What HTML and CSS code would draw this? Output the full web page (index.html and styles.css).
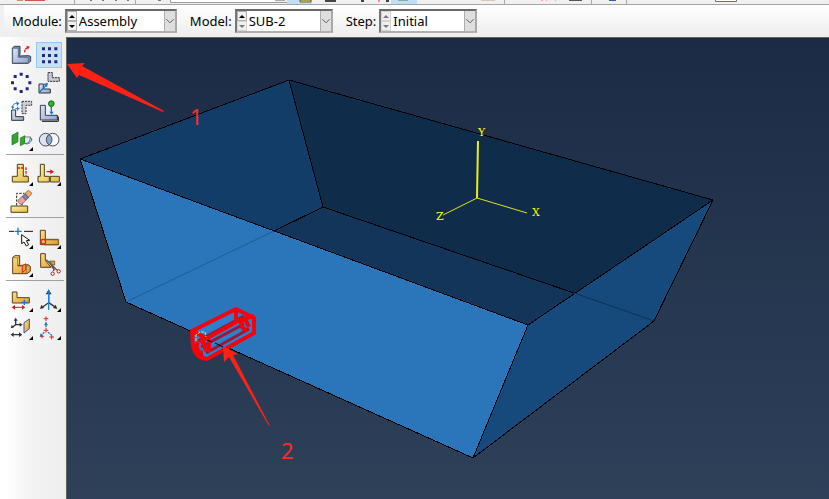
FILE: index.html
```html
<!DOCTYPE html>
<html lang="en">
<head>
<meta charset="utf-8">
<title>Assembly module</title>
<link rel="stylesheet" href="styles.css">
</head>
<body>
<svg width="0" height="0" class="defs" aria-hidden="true">
  <defs>
    <linearGradient id="steel" x1="0" y1="0" x2="1" y2="1"><stop offset="0" stop-color="#dce6f5"/><stop offset="1" stop-color="#8ea5ca"/></linearGradient>
    <linearGradient id="gold" x1="0" y1="0" x2="1" y2="1"><stop offset="0" stop-color="#ffef9c"/><stop offset="1" stop-color="#e3bb4c"/></linearGradient>
    <linearGradient id="amber" x1="0" y1="0" x2="1" y2="1"><stop offset="0" stop-color="#ffdf8a"/><stop offset="1" stop-color="#dc9c35"/></linearGradient>
  </defs>
</svg>

<header class="topstrip">
  <svg width="829" height="4" viewBox="0 0 829 4" aria-hidden="true">
    <path d="M17 0h6v1h-6z" fill="#b99b5c"/><path d="M25 0h20v1H25z" fill="#d9534c"/>
    <path d="M74.500 0v4M135.500 0v4M504.500 0v4M591.500 0v4M626.500 0v4" stroke="#a8a8a8"/>
    <path d="M90 0h2M102 0h2M115 0h2M127 0h2M158 0h3" stroke="#777" stroke-width="2"/>
    <path d="M170.500 0v2.500H288" fill="none" stroke="#9a9a9a"/><path d="M171 0h104v2H171z" fill="#fff"/>
    <path d="M275 0h10v1h-10z" fill="#aaa"/><path d="M287 0h25v4h-25zM391 0h26v4h-26z" fill="#bfdff6"/>
    <path d="M300 0h11v2h-11z" fill="#f1e37c" stroke="#655d2c"/>
    <path d="M325 1h11M361 1h3M386 1h3" stroke="#444" stroke-width="2"/><path d="M379 0v2" stroke="#d33"/>
    <path d="M398 0h10v1h-10z" fill="#8aa"/><path d="M481 0h14v1h-14z" fill="#d5cbb5"/>
    <path d="M541 0h2v1h-2zM546 0h1v1h-1zM555 0h1v1h-1z" fill="#f3a9a9"/><path d="M569 0h13v1h-13z" fill="#555"/><path d="M609 0h7v1h-7z" fill="#315fa5"/>
    <path d="M715.500-1v2.500h21V-1" fill="#fff" stroke="#77715b"/>
  </svg>
</header>

<form class="contextbar">
  <div class="field">
    <label for="module">Module:</label>
    <div class="combo wide">
      <span class="spin"><button type="button" aria-label="Previous module"><i class="up"></i></button><button type="button" aria-label="Next module"><i class="down"></i></button></span>
      <select id="module"><option>Assembly</option></select>
      <svg class="chevron" viewBox="0 0 11 20" aria-hidden="true"><path d="M1.500 8l4 4 4-4"/></svg>
    </div>
  </div>
  <div class="field">
    <label for="model">Model:</label>
    <div class="combo">
      <span class="spin"><button type="button" aria-label="Previous model"><i class="up"></i></button><button type="button" aria-label="Next model" disabled><i class="down"></i></button></span>
      <select id="model"><option>SUB-2</option></select>
      <svg class="chevron" viewBox="0 0 11 20" aria-hidden="true"><path d="M1.500 8l4 4 4-4"/></svg>
    </div>
  </div>
  <div class="field">
    <label for="step">Step:</label>
    <div class="combo">
      <span class="spin"><button type="button" aria-label="Previous step" disabled><i class="up"></i></button><button type="button" aria-label="Next step" disabled><i class="down"></i></button></span>
      <select id="step"><option>Initial</option></select>
      <svg class="chevron" viewBox="0 0 11 20" aria-hidden="true"><path d="M1.500 8l4 4 4-4"/></svg>
    </div>
  </div>
</form>

<div class="workspace">
  <nav class="toolbox" aria-label="Assembly tools">
    <div class="group">
      <button type="button" aria-label="Create instance"><svg viewBox="24 18 78 78">
        <path d="M37 36l6-5h17v25l-5 4 31-1 6 2v14l-7 7H37z" fill="#7890b8" stroke="#333f55" stroke-width="3"/>
        <path d="M38 37h17v27h30v17H38z" fill="url(#steel)" stroke="#465675" stroke-width="2"/>
        <path d="M74 49c0-9 4-13 10-14" fill="none" stroke="#e01b1b" stroke-width="4" stroke-dasharray="7 2"/><path d="M79 29l10 3-6 9z" fill="#e01b1b"/></svg></button>
      <button type="button" class="active" aria-label="Linear pattern"><svg viewBox="108 18 78 78"><path d="M126 34h9v9h-9zm18 0h9v9h-9zm19 0h9v9h-9zM126 54h9v9h-9zm18 0h9v9h-9zm19 0h9v9h-9zM126 73h9v9h-9zm18 0h9v9h-9zm19 0h9v9h-9z" fill="#26267c"/></svg></button>
      <button type="button" aria-label="Radial pattern"><svg viewBox="24 102 78 78"><path d="M59 110h9v9h-9zm18 7h9v9h-9zm8 19h9v9h-9zm-8 18h9v9h-9zm-18 8h9v9h-9zm-18-8h9v9h-9zm-8-18h9v9h-9zm8-19h9v9h-9z" fill="#26267c"/></svg></button>
      <button type="button" aria-label="Translate instance"><svg viewBox="108 102 78 78">
        <path d="M144 110h13v15h21v11h-34z" fill="#c3cbd8" stroke="#333" stroke-width="3" stroke-dasharray="7 2"/>
        <path d="M117 144h13v15h21v12h-34z" fill="url(#steel)" stroke="#333" stroke-width="3"/>
        <path d="M119 168l21-22" stroke="#1677d2" stroke-width="4"/><path d="M130 144l14-4-3 14z" fill="#1677d2"/></svg></button>
      <button type="button" aria-label="Rotate instance"><svg viewBox="24 186 78 78">
        <path d="M66 196h29v12H78v25H66z" fill="#c9cfdb" stroke="#333" stroke-width="3" stroke-dasharray="6 3"/>
        <path d="M35 222h12v20h24v11H35z" fill="url(#steel)" stroke="#333" stroke-width="3"/>
        <path d="M38 216c-2-10 7-16 15-13M46 218h13m-6-6v12" fill="none" stroke="#1677d2" stroke-width="3"/><path d="M49 196l9 6-7 8zM33 211l5 9 5-8z" fill="#1677d2"/></svg></button>
      <button type="button" aria-label="Translate to"><svg viewBox="108 186 78 78">
        <path d="M121 208h15v30h36v14h-51z" fill="url(#steel)" stroke="#333f55" stroke-width="3"/><path d="M171 239l4 4v13h-49" fill="none" stroke="#111" stroke-width="3"/>
        <path d="M154 209v22" stroke="#1677d2" stroke-width="4"/><path d="M148 227h13l-6 9z" fill="#1677d2"/><circle cx="154" cy="203" r="8.500" fill="#2fb32a" stroke="#136b16" stroke-width="3"/></svg></button>
      <button type="button" class="more" aria-label="Create constraint"><svg viewBox="24 270 78 78">
        <path d="M36 298l18-10v29l-18 10zM61 306l14-7v23l-14 7z" fill="#35a52d" stroke="#1f701f" stroke-width="2"/>
        <path d="M75 303h17l-5 15-11 6" fill="#e8edf4" stroke="#444" stroke-width="2"/><path d="M75 322c10 4 17-1 20-12m-5-2h5v6" fill="none" stroke="#1677d2" stroke-width="3"/></svg></button>
      <button type="button" aria-label="Merge or cut instances"><svg viewBox="108 270 78 78"><circle cx="137" cy="311" r="19" fill="#dce4f1"/><circle cx="158" cy="311" r="19" fill="#f7f8fb"/><path d="M147 295a19 19 0 0 1 0 32 19 19 0 0 1 0-32z" fill="#8fa7d0"/><g fill="none" stroke="#4a4f58" stroke-width="3"><circle cx="137" cy="311" r="19"/><circle cx="158" cy="311" r="19"/></g></svg></button>
    </div>
    <hr>
    <div class="group">
      <button type="button" class="more" aria-label="Create feature"><svg viewBox="24 21 78 78">
        <path d="M52 31h18v36h15v17H37V67h15z" fill="url(#gold)" stroke="#4d421c" stroke-width="3"/><path d="M54 42h16" stroke="#d51c1c" stroke-width="5" stroke-dasharray="6 3"/><path d="M78 40v25" stroke="#d51c1c" stroke-width="4" stroke-dasharray="8 3"/></svg></button>
      <button type="button" class="more" aria-label="Move feature"><svg viewBox="108 21 78 78">
        <path d="M121 31h12v36h15v17h-34V67h7zM151 67h27v17h-27z" fill="url(#gold)" stroke="#4d421c" stroke-width="3"/><path d="M140 53h14" stroke="#d51c1c" stroke-width="4"/><path d="M151 46l11 7-11 8z" fill="#d51c1c"/></svg></button>
      <button type="button" aria-label="Delete feature"><svg viewBox="24 105 78 78">
        <path d="M33 156h50v19H33z" fill="url(#gold)" stroke="#4d421c" stroke-width="3"/><path d="M50 154v-36h23M66 154v-10" fill="none" stroke="#222" stroke-width="3" stroke-dasharray="7 4"/>
        <path d="M75 118l10-9 11 9-12 14z" fill="#f5ae63" stroke="#6b4a2a" stroke-width="2"/><path d="M67 127l8-8 11 12-9 8z" fill="#7186b8" stroke="#34415f" stroke-width="2"/><path d="M55 138l11-11 11 12-10 11c-6 4-16-6-12-12z" fill="#eea29c" stroke="#7c403f" stroke-width="2"/></svg></button>
    </div>
    <hr>
    <div class="group">
      <button type="button" class="more" aria-label="Create datum point"><svg viewBox="24 12 78 78">
        <path d="M27 34h15m30 0h27" stroke="#111" stroke-width="3"/><path d="M44 34h21M54 23v22" stroke="#1677d2" stroke-width="4"/><path d="M65 44v27l7-5 7 12 7-4-7-12 10-1z" fill="#fff" stroke="#111" stroke-width="3"/></svg></button>
      <button type="button" class="more" aria-label="Assembly features"><svg viewBox="108 12 78 78">
        <path d="M121 31h15v27h39v16h-54z" fill="url(#amber)" stroke="#5b4218" stroke-width="3"/><path d="M136 60h40v15h-42" fill="none" stroke="#92712f" stroke-width="2"/><circle cx="130" cy="65" r="7" fill="#f4bf62" stroke="#e02515" stroke-width="4"/></svg></button>
      <button type="button" class="more" aria-label="Partition"><svg viewBox="24 96 78 78">
        <path d="M38 112l7-5h14v26l-5 4 30-3 7 5v15l-10 7H38z" fill="url(#amber)" stroke="#5b4218" stroke-width="3"/><path d="M39 113h14v25h26v21M53 113l6-5m20 30l11-2" fill="none" stroke="#81602a" stroke-width="2"/><path d="M67 138l10-7v18l-10 9z" fill="#e7a044" stroke="#e02515" stroke-width="3"/></svg></button>
      <button type="button" aria-label="Cut geometry"><svg viewBox="108 96 78 78">
        <path d="M122 101h14v20l17 21h-31z" fill="url(#amber)" stroke="#5b4218" stroke-width="3"/><path d="M150 123h14v12h-8z" fill="#e59b31" stroke="#5b4218" stroke-width="2"/>
        <path d="M139 119l31 30m-24-26l17 28" fill="none" stroke="#555" stroke-width="4"/><path d="M163 149l-4 5m10-5l5 2" stroke="#9f1c1c" stroke-width="3"/><circle cx="158" cy="161" r="5" fill="#fff" stroke="#9f1c1c" stroke-width="3"/><circle cx="176" cy="154" r="5" fill="#fff" stroke="#9f1c1c" stroke-width="3"/></svg></button>
    </div>
    <hr>
    <div class="group">
      <button type="button" class="more" aria-label="Edit part dimensions"><svg viewBox="24 201 78 78">
        <path d="M37 216h14v17h37v16H37z" fill="url(#amber)" stroke="#5b4218" stroke-width="3"/><path d="M65 247h17m-9-8v16" stroke="#1677d2" stroke-width="4"/><path d="M42 262h26" stroke="#d51c1c" stroke-width="3"/><path d="M45 255v14l-10-7zM66 255v14l10-7z" fill="#d51c1c"/></svg></button>
      <button type="button" class="more" aria-label="Create datum axis"><svg viewBox="108 201 78 78">
        <path d="M146 216v32l-19 14m19-14l21 14" fill="none" stroke="#333" stroke-width="4"/><path d="M120 267l4-13 8 10zM172 267l-13-3 8-10zM137 223l9-14 9 14z" fill="#333"/><path d="M146 214v56" stroke="#1687e3" stroke-width="4"/><path d="M141 219l5-13 5 13z" fill="#1677d2"/></svg></button>
      <button type="button" class="more" aria-label="Create datum plane"><svg viewBox="24 285 78 78">
        <path d="M47 300v14l-10 8m10-8h15M39 344h20" fill="none" stroke="#333" stroke-width="4"/><path d="M41 302l6-9 6 9zM32 325l3-10 7 7zM59 308l9 6-9 6zM41 337v14l-9-7zM57 337v14l10-7z" fill="#333"/><path d="M72 308l16-11v29l-16 13z" fill="url(#amber)" stroke="#35599c" stroke-width="3"/></svg></button>
      <button type="button" class="more" aria-label="Create coordinate system"><svg viewBox="108 285 78 78">
        <path d="M131 296h14m-7-7v14m-7 28h14m-7-7v14m-18 11h12m-6-6v12m22-4h14m-7-7v14" stroke="#e02525" stroke-width="3"/><path d="M138 307v18m-5 12l-7 6m18-6l10 8" stroke="#1677d2" stroke-width="4" stroke-dasharray="6 3"/><path d="M132 316l6-9 6 9zM119 350l3-10 7 7z" fill="#1677d2"/></svg></button>
    </div>
  </nav>

  <main class="viewport">
    <svg viewBox="67 38 762 461" preserveAspectRatio="xMinYMin meet" role="img" aria-label="Open tank with a pipe segment">
      <path d="M80 159L289 80l34 127L126 302z" fill="#133d69"/>
      <path d="M289 80l424 120-59 121-331-114z" fill="#0f2c4a"/>
      <path d="M323 207l331 114-181 137-347-156z" fill="#123559"/>
      <path d="M528 325l185-125-59 121-181 137z" fill="#16497c"/>
      <path d="M80 159l448 166-55 133-347-156z" fill="#2b76ba"/>
      <g fill="none" stroke="#000" shape-rendering="crispEdges">
        <path d="M80 159L289 80l424 120-185 125zL126 302l347 156 55-133M473 458l181-137 59-121M289 80l34 127-49 24M323 207l251 86"/>
      </g>
      <path d="M274 231l-148 71" fill="none" stroke="#205b8e"/><path d="M574 293l80 28" fill="none" stroke="#0d3156"/>
      <g stroke="#ff0" fill="none"><path d="M478 141l-1 57" stroke="#eeee10" stroke-width="2"/><path d="M527 213l-50-15-34 17" stroke="#e3e31d"/></g>
      <g class="axis"><text x="478" y="136">Y</text><text x="532" y="216">X</text><text x="436" y="220">Z</text></g>
      <g class="pipe">
        <path class="face" d="M192 332l44-22 18 8v15l-46 26-14-10z"/>
        <g class="dim"><path d="M198 341l46-25M201 347l43-23M206 353l43-24"/></g>
        <path d="M192 331l44-22 18 9v15l-47 26c-8 0-12-5-14-13zM192 331l18 9M236 309v12M209 340v12M200 342l40-22 14-4"/>
        <path d="M198 342c-3 5 0 11 5 11M243 319c-4 4-1 11 4 11M203 342l3 9M245 319l4 8"/>
        <path class="hint" d="M196 341v-6l4-3h5l1 5"/><path class="edge" d="M207 340l5 2m3 1l8 4"/>
      </g>
      <g fill="#ff2214"><path d="M67 64l18-1-3 3 82 45-1 1-84-37-2 3z"/><path d="M223 346l15 8-5 1 37 71h-1l-40-69-5 5z"/></g>
      <g class="note"><text x="190" y="125">1</text><text x="281" y="459">2</text></g>
    </svg>
  </main>
</div>
</body>
</html>
```
FILE: styles.css
```css
* { box-sizing: border-box; }
body {
  margin: 0;
  min-height: 100vh;
  display: flex;
  flex-direction: column;
  overflow: hidden;
  background: #f0f0f0;
  color: #000;
  font: 13px/20px "Noto Sans", "Open Sans", sans-serif;
}
.defs { position: absolute; }
.topstrip {
  border-bottom: 1px solid #a5a5a5;
  overflow: hidden;
}
.topstrip svg { display: block; }
.contextbar {
  display: flex;
  align-items: center;
  gap: 13px;
  height: 32px;
  margin-left: 4px;
  padding: 0 8px;
  background: linear-gradient(#fff, #ededed);
}
.field { display: flex; align-items: center; gap: 3px; }
.combo {
  position: relative;
  display: flex;
  width: 98px;
  height: 24px;
  border: 2px solid;
  border-color: #696969 #a8a8a8 #b0b0b0 #777;
  background: #fff;
}
.combo.wide { width: 112px; }
.spin { display: flex; flex-direction: column; width: 10px; }
.spin button {
  flex: 1;
  display: grid;
  place-items: center;
  padding: 0;
  border: 1px solid #b0b0b0;
  background: #f0f0f0;
}
.spin i { border: 3px solid transparent; }
.spin .up { border-top: 0; border-bottom-color: #000; }
.spin .down { border-bottom: 0; border-top-color: #000; }
.spin button:disabled { border-color: #d4d4d4; }
.spin button:disabled i { opacity: 0.5; }
select {
  flex: 1;
  min-width: 0;
  padding: 0 2px;
  border: 0;
  background: none;
  color: #000;
  font: inherit;
  appearance: none;
}
.chevron {
  position: absolute;
  right: 0;
  top: 0;
  width: 11px;
  height: 20px;
  background: #dedede;
  border-left: 1px solid #adadad;
  pointer-events: none;
}
.chevron path { fill: none; stroke: #555; }
.workspace {
  flex: 1;
  display: flex;
  min-height: 0;
}
.toolbox {
  width: 66px;
  padding: 5px 2px 0 6px;
  background: linear-gradient(90deg, #fff 6px, #f3f3f3 30px, #eee);
}
.group {
  display: grid;
  grid-template-columns: 26px 26px;
  gap: 2px;
  padding-left: 2px;
}
.group button {
  position: relative;
  width: 26px;
  height: 26px;
  padding: 0;
  border: 0;
  background: none;
}
.group svg { display: block; width: 26px; height: 26px; }
.group .active { background: #c5e2f8; box-shadow: inset 0 0 0 1px #90c8f6; }
.more::after {
  content: "";
  position: absolute;
  right: 1px;
  bottom: 1px;
  border: 2px solid #000;
  border-top-color: transparent;
  border-left-color: transparent;
}
hr {
  height: 1px;
  margin: 2px 0 6px;
  border: 0;
  background: #a0a0a0;
}
.viewport {
  flex: 1;
  min-width: 0;
  border-left: 1px solid #62635e;
  border-top: 1px solid #62635e;
  background: linear-gradient(#1c2b45, #2e4159);
}
.viewport svg { display: block; width: 100%; }
.axis { fill: #ff0; font: 11px "DejaVu Serif", serif; }
.note { fill: #ff2a22; font: 22px "Noto Sans", sans-serif; }
.pipe { fill: none; stroke: #fa0008; stroke-width: 4; stroke-linejoin: round; }
.pipe .face { fill: #2b80d0; stroke: none; }
.pipe .dim { stroke: #9d1734; stroke-width: 3; }
.pipe .hint { stroke: #dfdf45; stroke-width: 1; stroke-dasharray: 3 1; }
.pipe .edge { stroke: #000; stroke-width: 1; }
```
